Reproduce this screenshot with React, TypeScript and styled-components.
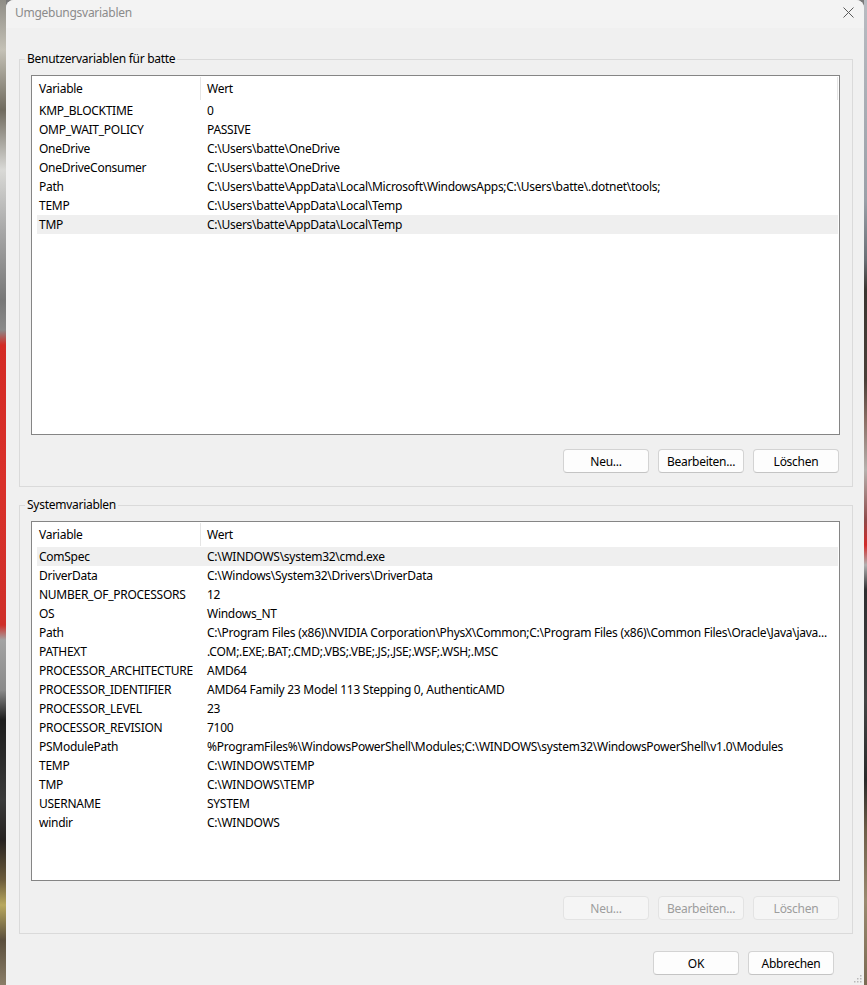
import React from "react";
import styled, { createGlobalStyle } from "styled-components";

const GlobalStyle = createGlobalStyle`
  html, body {
    margin: 0;
    padding: 0;
    background: #7a7a7a;
  }
  body {
    font-family: "Segoe UI", "Noto Sans", "Liberation Sans", sans-serif;
    font-size: 12px;
    letter-spacing: -0.27px;
    color: #000;
  }
`;

type Variable = { name: string; value: string };

const userVars: Variable[] = [
  { name: "KMP_BLOCKTIME", value: "0" },
  { name: "OMP_WAIT_POLICY", value: "PASSIVE" },
  { name: "OneDrive", value: "C:\\Users\\batte\\OneDrive" },
  { name: "OneDriveConsumer", value: "C:\\Users\\batte\\OneDrive" },
  {
    name: "Path",
    value: "C:\\Users\\batte\\AppData\\Local\\Microsoft\\WindowsApps;C:\\Users\\batte\\.dotnet\\tools;",
  },
  { name: "TEMP", value: "C:\\Users\\batte\\AppData\\Local\\Temp" },
  { name: "TMP", value: "C:\\Users\\batte\\AppData\\Local\\Temp" },
];

const systemVars: Variable[] = [
  { name: "ComSpec", value: "C:\\WINDOWS\\system32\\cmd.exe" },
  { name: "DriverData", value: "C:\\Windows\\System32\\Drivers\\DriverData" },
  { name: "NUMBER_OF_PROCESSORS", value: "12" },
  { name: "OS", value: "Windows_NT" },
  {
    name: "Path",
    value:
      "C:\\Program Files (x86)\\NVIDIA Corporation\\PhysX\\Common;C:\\Program Files (x86)\\Common Files\\Oracle\\Java\\java...",
  },
  { name: "PATHEXT", value: ".COM;.EXE;.BAT;.CMD;.VBS;.VBE;.JS;.JSE;.WSF;.WSH;.MSC" },
  { name: "PROCESSOR_ARCHITECTURE", value: "AMD64" },
  { name: "PROCESSOR_IDENTIFIER", value: "AMD64 Family 23 Model 113 Stepping 0, AuthenticAMD" },
  { name: "PROCESSOR_LEVEL", value: "23" },
  { name: "PROCESSOR_REVISION", value: "7100" },
  {
    name: "PSModulePath",
    value:
      "%ProgramFiles%\\WindowsPowerShell\\Modules;C:\\WINDOWS\\system32\\WindowsPowerShell\\v1.0\\Modules",
  },
  { name: "TEMP", value: "C:\\WINDOWS\\TEMP" },
  { name: "TMP", value: "C:\\WINDOWS\\TEMP" },
  { name: "USERNAME", value: "SYSTEM" },
  { name: "windir", value: "C:\\WINDOWS" },
];

const Page = styled.div`
  display: flex;
  width: 867px;
  height: 985px;
  overflow: hidden;
`;

const PhotoStrip = styled.div<{ $side: "left" | "right" }>`
  flex: none;
  width: ${({ $side }) => ($side === "left" ? 6 : 3)}px;
  background: ${({ $side }) =>
    $side === "left"
      ? `linear-gradient(180deg,
          #8f8d86 0px, #c4c1b6 50px, #6f6a5e 110px, #d9d9d6 170px,
          #a8a8a8 230px, #777 300px, #8a8a8a 330px,
          #d42a24 345px, #d9302a 480px, #cf2f29 625px,
          #a3a3a3 640px, #8a8a8a 690px, #1c1c1c 720px, #3a3a3a 800px,
          #262220 840px, #6b5b3b 880px, #b8a85e 905px, #5a4e3c 940px, #8a7e68 985px)`
      : `linear-gradient(180deg,
          #b9bcc2 0px, #9aa0a8 200px, #6a6f75 260px, #3a3530 290px,
          #4a3f38 380px, #8a6e64 420px, #b6b2ae 470px, #8e4a4a 520px,
          #d22a2a 545px, #b0b0b0 565px, #2e2e30 590px, #444 700px,
          #2a2a2a 780px, #6e5e48 830px, #9a8a70 900px, #7a6a52 985px)`};
`;

const Dialog = styled.div`
  position: relative;
  flex: none;
  width: 858px;
  display: flex;
  flex-direction: column;
  background: #f0f0f0;
  border-radius: 8px 8px 0 0;
  overflow: hidden;
`;

const TitleBar = styled.div`
  box-sizing: border-box;
  height: 28px;
  flex: none;
  display: flex;
  align-items: center;
  justify-content: space-between;
  padding: 0 10px 4px 9px;
  background: #f3f3f3;
`;

const Title = styled.span`
  color: #8b8b8b;
  font-size: 12px;
`;

const CloseButton = styled.span`
  display: flex;
  width: 11px;
  height: 11px;
`;

const Body = styled.div`
  display: flex;
  flex-direction: column;
  padding: 23px 11px 0 13px;
`;

const Group = styled.fieldset<{ $spaced?: boolean }>`
  margin: ${({ $spaced }) => ($spaced ? "10px 0 0" : "0")};
  padding: 8px 12px 13px 11px;
  min-width: 0;
  border: 1px solid #dadada;
  display: flex;
  flex-direction: column;
`;

const Legend = styled.legend`
  margin-left: -6px;
  padding: 0 2px;
  line-height: 16px;
  color: #000;
`;

const ListBox = styled.div`
  height: 358px;
  border: 1px solid #858585;
  background: #fff;
  overflow: hidden;
`;

const Header = styled.div<{ $endDivider?: boolean }>`
  display: grid;
  grid-template-columns: 168px 1px ${({ $endDivider }) => ($endDivider ? "636px 1px" : "1fr")};
  height: 25px;
  align-items: center;
`;

const HeaderCell = styled.div<{ $first?: boolean }>`
  padding-left: ${({ $first }) => ($first ? 7 : 6)}px;
  line-height: 16px;
`;

const HeaderDivider = styled.div`
  height: 23px;
  align-self: start;
  margin-top: 1px;
  background: #e5e5e5;
`;

const Row = styled.div<{ $selected?: boolean }>`
  display: grid;
  grid-template-columns: 168px 1fr;
  height: 19px;
  align-items: center;
  margin: 0 1px 0 5px;
  background: ${({ $selected }) => ($selected ? "#efefef" : "transparent")};
`;

const Cell = styled.div`
  padding-left: 2px;
  white-space: nowrap;
  overflow: hidden;
  line-height: 16px;
`;

const ButtonRow = styled.div<{ $gap: number }>`
  display: flex;
  justify-content: flex-end;
  gap: 9px;
  margin-top: ${({ $gap }) => $gap}px;
  padding-right: 1px;
`;

const Button = styled.button`
  width: 86px;
  height: 24px;
  padding: 0;
  font-family: inherit;
  font-size: 12px;
  letter-spacing: inherit;
  color: #000;
  background: #fdfdfd;
  border: 1px solid #d3d3d3;
  border-bottom-color: #c4c4c4;
  border-radius: 4px;

  &:disabled {
    color: #9d9d9d;
    background: #f5f5f5;
    border-color: #e3e3e3;
  }
`;

const Footer = styled.div`
  display: flex;
  justify-content: flex-end;
  gap: 9px;
  padding: 17px 30px 0 0;
`;

const Grip = styled.svg`
  position: absolute;
  right: 2px;
  bottom: 2px;
`;

const VariableList = ({ rows, selected, endDivider }: { rows: Variable[]; selected: number; endDivider?: boolean }) => (
  <ListBox>
    <Header $endDivider={endDivider}>
      <HeaderCell $first>Variable</HeaderCell>
      <HeaderDivider />
      <HeaderCell>Wert</HeaderCell>
      {endDivider && <HeaderDivider />}
    </Header>
    {rows.map((row, i) => (
      <Row key={row.name + i} $selected={i === selected}>
        <Cell>{row.name}</Cell>
        <Cell>{row.value}</Cell>
      </Row>
    ))}
  </ListBox>
);

export default function App() {
  return (
    <>
      <GlobalStyle />
      <Page>
        <PhotoStrip $side="left" />
        <Dialog>
          <TitleBar>
            <Title>Umgebungsvariablen</Title>
            <CloseButton>
              <svg width="11" height="11" viewBox="0 0 11 11">
                <path d="M0.5 0.5 L10.5 10.5 M10.5 0.5 L0.5 10.5" stroke="#5a5a5a" strokeWidth="1" fill="none" />
              </svg>
            </CloseButton>
          </TitleBar>
          <Body>
            <Group>
              <Legend>Benutzervariablen für batte</Legend>
              <VariableList rows={userVars} selected={6} endDivider />
              <ButtonRow $gap={14}>
                <Button>Neu...</Button>
                <Button>Bearbeiten...</Button>
                <Button>Löschen</Button>
              </ButtonRow>
            </Group>
            <Group $spaced>
              <Legend>Systemvariablen</Legend>
              <VariableList rows={systemVars} selected={0} />
              <ButtonRow $gap={15}>
                <Button disabled>Neu...</Button>
                <Button disabled>Bearbeiten...</Button>
                <Button disabled>Löschen</Button>
              </ButtonRow>
            </Group>
          </Body>
          <Footer>
            <Button>OK</Button>
            <Button>Abbrechen</Button>
          </Footer>
          <Grip width="8" height="8" viewBox="0 0 8 8">
            <rect x="6" y="0" width="1.5" height="1.5" fill="#b8b8b8" />
            <rect x="3" y="3" width="1.5" height="1.5" fill="#b8b8b8" />
            <rect x="6" y="3" width="1.5" height="1.5" fill="#b8b8b8" />
            <rect x="0" y="6" width="1.5" height="1.5" fill="#b8b8b8" />
            <rect x="3" y="6" width="1.5" height="1.5" fill="#b8b8b8" />
            <rect x="6" y="6" width="1.5" height="1.5" fill="#b8b8b8" />
          </Grip>
        </Dialog>
        <PhotoStrip $side="right" />
      </Page>
    </>
  );
}
